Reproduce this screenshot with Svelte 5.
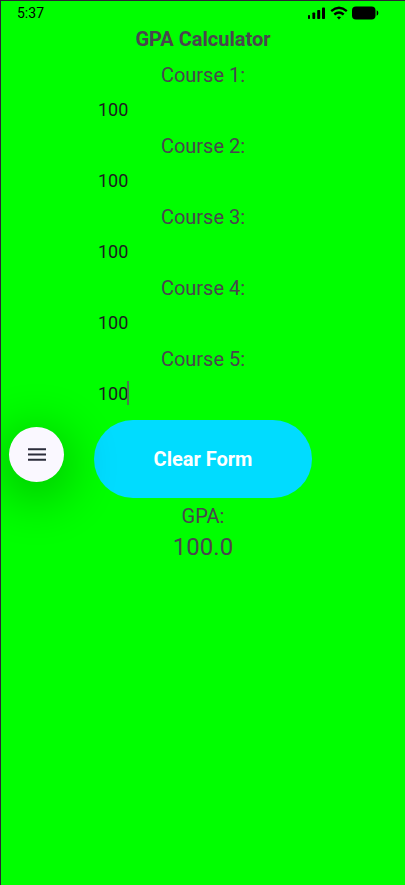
<script>
  let scores = $state(['100', '100', '100', '100', '100']);
  let active = $state(4);

  const gpa = $derived(
    (scores.reduce((sum, s) => sum + (Number(s) || 0), 0) / scores.length).toFixed(1)
  );

  function clearForm() {
    scores = scores.map(() => '');
    active = -1;
  }
</script>

<div class="screen">
  <header class="status">
    <span class="time">5:37</span>
    <div class="indicators">
      <svg width="18" height="14" viewBox="0 0 18 14" aria-hidden="true">
        <rect x="0" y="9" width="2" height="4" rx="0.7" />
        <rect x="4.4" y="6.5" width="2.8" height="6.5" rx="0.8" />
        <rect x="9.2" y="4" width="3" height="9" rx="0.8" />
        <rect x="14" y="1.5" width="3" height="11.5" rx="0.8" />
      </svg>
      <svg width="18" height="14" viewBox="0 0 18 14" aria-hidden="true">
        <g fill="none" stroke="#000" stroke-width="2.3">
          <path d="M1.2 5.2Q9 -1.6 16.8 5.2" />
          <path d="M4.3 8.5Q9 4.5 13.7 8.5" />
        </g>
        <path d="M9 13.4L6.9 11.2Q9 9.6 11.1 11.2Z" />
      </svg>
      <svg width="27" height="14" viewBox="0 0 27 14" aria-hidden="true">
        <rect x="0" y="0.5" width="23.5" height="13" rx="4" />
        <path d="M24.7 4.2Q26.4 5 26.4 7T24.7 9.8Z" />
      </svg>
    </div>
  </header>

  <main>
    <h1>GPA Calculator</h1>
    {#each scores as score, i}
      <div class="course">
        <label for="course-{i}">Course {i + 1}:</label>
        <div class="field">
          <input
            id="course-{i}"
            type="text"
            inputmode="numeric"
            bind:value={scores[i]}
            onfocus={() => (active = -1)}
          />
          {#if active === i}<span class="caret"></span>{/if}
        </div>
      </div>
    {/each}
    <button class="clear" type="button" onclick={clearForm}>Clear Form</button>
    <p class="caption">GPA:</p>
    <output>{gpa}</output>
  </main>

  <button class="menu" type="button" aria-label="Menu">
    <svg width="18" height="13" viewBox="0 0 18 13" aria-hidden="true">
      <path d="M0 1.3H18M0 6.6H18M0 11.8H18" stroke="#2b2d3b" stroke-width="2" />
    </svg>
  </button>
</div>

<style>
  :global(body) {
    margin: 0;
    background: #00ff00;
  }
  .screen {
    position: relative;
    box-sizing: border-box;
    min-height: 100vh;
    overflow: hidden;
    border-top: 1px solid #2b2433;
    border-left: 1px solid #2b2433;
    background: #00ff00;
    font-family: Roboto, 'Liberation Sans', sans-serif;
    color: #4a454e;
  }
  .status {
    display: flex;
    justify-content: space-between;
    align-items: center;
    height: 23px;
    padding: 0 26px 0 16px;
    color: #000;
  }
  .time {
    font-size: 14px;
    line-height: 16px;
  }
  .indicators {
    display: flex;
    gap: 4px;
  }
  .indicators svg {
    display: block;
  }
  main {
    display: flex;
    flex-direction: column;
    align-items: center;
  }
  h1 {
    margin: 0 0 6px;
    font-size: 20px;
    line-height: 30px;
    font-weight: 700;
  }
  .course {
    display: flex;
    flex-direction: column;
    align-items: center;
    width: 54%;
  }
  label,
  .caption {
    margin: 0;
    font-size: 20px;
    line-height: 30px;
  }
  .field {
    position: relative;
    width: 100%;
    height: 41px;
  }
  input {
    display: block;
    box-sizing: border-box;
    width: 100%;
    height: 38px;
    padding: 0 4px;
    border: 0;
    outline: 0;
    background: transparent;
    font: 18px/24px Roboto, 'Liberation Sans', sans-serif;
    color: #1d1b20;
  }
  .caret {
    position: absolute;
    left: 33px;
    top: 7px;
    width: 2px;
    height: 24px;
    background: #4a7a4e;
  }
  .clear {
    width: 54%;
    height: 78px;
    margin: 5px 0 3px;
    padding: 0;
    border: 0;
    border-radius: 39px;
    background: #00dcff;
    color: #fff;
    font: 700 20px/30px Roboto, 'Liberation Sans', sans-serif;
  }
  output {
    font-size: 24px;
    line-height: 32px;
  }
  .menu {
    position: absolute;
    left: 8px;
    top: 426px;
    display: flex;
    align-items: center;
    justify-content: center;
    width: 55px;
    height: 55px;
    padding: 0;
    border: 0;
    border-radius: 50%;
    background: #faf8ff;
    box-shadow: 0 10px 50px 8px rgba(0, 0, 0, 0.24);
  }
</style>
